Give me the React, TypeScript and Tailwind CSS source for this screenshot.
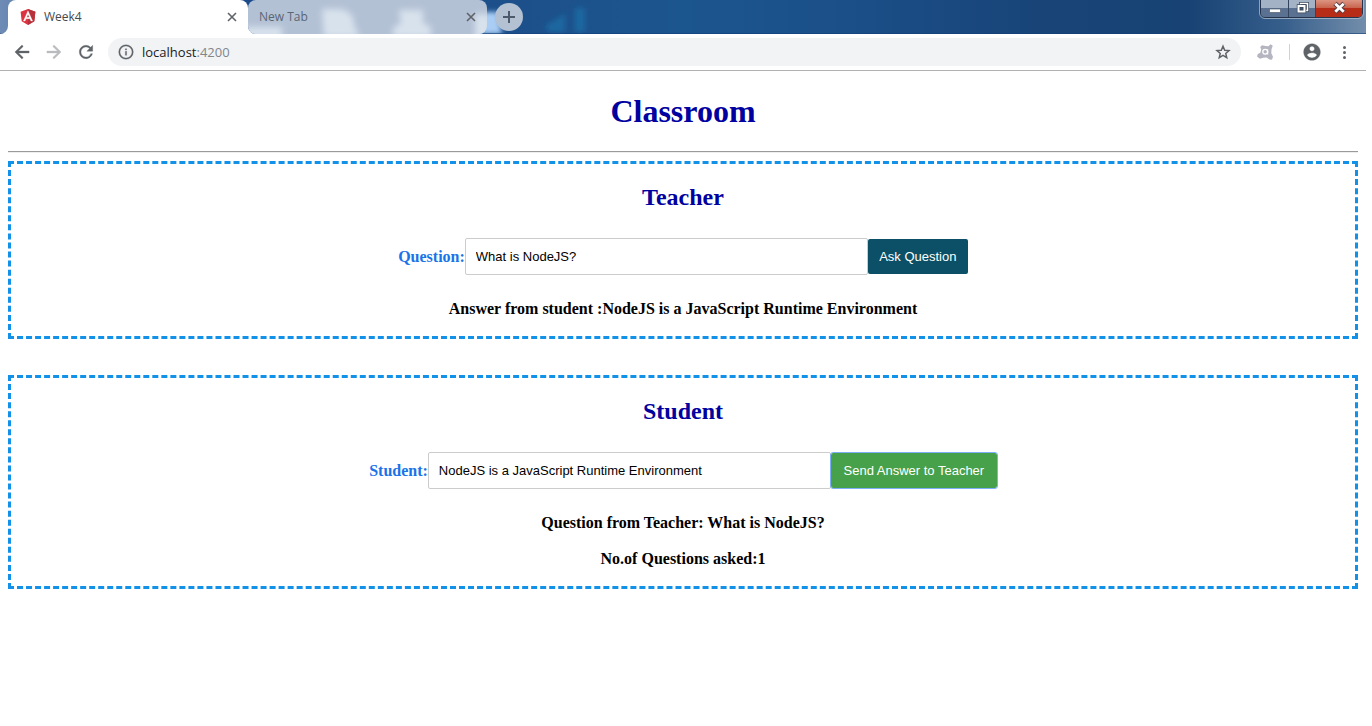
import type { ReactNode } from "react";

function AngularIcon() {
  return (
    <svg width="16" height="16" viewBox="0 0 16 16" aria-hidden="true">
      <path d="M8 0 .6 2.700l1.100 9.600L8 16l6.300-3.700L15.400 2.700z" fill="#dd3340" />
      <path d="M8 0v16l6.300-3.700L15.400 2.700z" fill="#b8303b" />
      <path d="M8 1.800 3.400 12h1.700l.95-2.300h3.900L10.900 12h1.700zm0 3.400 1.350 3.100h-2.700z" fill="#fff" stroke="#fff" strokeWidth=".3" />
    </svg>
  );
}

function CloseIcon() {
  return (
    <svg width="10" height="10" viewBox="0 0 10 10" aria-hidden="true">
      <path d="m1 1 8 8M9 1 1 9" stroke="#5f6368" strokeWidth="1.600" />
    </svg>
  );
}

function MaterialIcon({ d, color = "#5f6368", size = 20 }: { d: string; color?: string; size?: number }) {
  return (
    <svg width={size} height={size} viewBox="0 0 24 24" fill={color} stroke={color} strokeWidth=".4" aria-hidden="true">
      <path d={d} />
    </svg>
  );
}

function StripBackdrop() {
  return (
    <svg className="absolute inset-0 h-full w-full" viewBox="0 0 1366 34" preserveAspectRatio="none" aria-hidden="true">
      <defs>
        <linearGradient id="sky">
          <stop offset="0" stopColor="#6d8bb5" />
          <stop offset=".02" stopColor="#5f80ad" />
          <stop offset=".17" stopColor="#1b4a8a" />
          <stop offset=".36" stopColor="#1d4f8a" />
          <stop offset=".5" stopColor="#1c568f" />
          <stop offset=".62" stopColor="#1b4f88" />
          <stop offset=".76" stopColor="#184478" />
          <stop offset=".87" stopColor="#174273" />
          <stop offset=".94" stopColor="#375f8c" />
          <stop offset="1" stopColor="#738eab" />
        </linearGradient>
        <filter id="soft" x="-50%" y="-50%" width="200%" height="200%">
          <feGaussianBlur stdDeviation="2.500" />
        </filter>
      </defs>
      <rect width="1366" height="34" fill="url(#sky)" />
      <g filter="url(#soft)">
        <path d="M480 12h18l4 22h-22z" fill="#a9cdf5" />
        <path d="M545 26l20-12v18h-16zM575 8h10v24h-10z" fill="#1c70a8" opacity=".7" />
      </g>
      <rect y="33" width="1366" height="1" fill="#143f7a" opacity=".6" />
    </svg>
  );
}

function TabGlow() {
  return (
    <svg className="absolute inset-0 h-full w-full" viewBox="0 0 239 34" preserveAspectRatio="none" aria-hidden="true">
      <defs>
        <filter id="haze" x="-50%" y="-100%" width="200%" height="300%">
          <feGaussianBlur stdDeviation="3" />
        </filter>
      </defs>
      <rect width="239" height="34" fill="#b3c1d5" />
      <g filter="url(#haze)" fill="#d8e2ed">
        <path d="M74 9h18q14 2 14 16l6 12H76zM151 10h24v13l8 4v10h-38V28l8-5zM227 14h16v26h-16z" />
        <path d="M-4 27h38v12H-4z" />
      </g>
    </svg>
  );
}

function WindowControls() {
  return (
    <div className="absolute top-0 right-[3px] flex h-[18px] overflow-hidden rounded-b-[5px] border border-t-0 border-[#25344c] outline outline-[#b5c3d3]/70">
      <button type="button" aria-label="Minimize" className="flex w-[28px] items-center justify-center border-r border-[#33445e] bg-linear-to-b from-[#a3b2c5] from-45% to-[#5a7191] to-50%">
        <svg width="12" height="18" viewBox="0 0 12 18" aria-hidden="true">
          <path d="M.5 9h11v3.500H.5z" fill="#fff" stroke="#52606f" strokeWidth=".7" />
        </svg>
      </button>
      <button type="button" aria-label="Restore" className="flex w-[27px] items-center justify-center border-r border-[#33445e] bg-linear-to-b from-[#a3b2c5] from-45% to-[#5a7191] to-50%">
        <svg width="13" height="18" viewBox="0 0 13 18" aria-hidden="true">
          <path d="M4.500 3.500h7v7h-7z" fill="#67788f" stroke="#3b4759" strokeWidth="3" />
          <path d="M4.500 3.500h7v7h-7z" fill="none" stroke="#fff" strokeWidth="1.500" />
          <path d="M2.500 6h6v5.500h-6z" fill="#44546b" stroke="#3b4759" strokeWidth="3.400" />
          <path d="M2.500 6h6v5.500h-6z" fill="none" stroke="#fff" strokeWidth="2" />
        </svg>
      </button>
      <button type="button" aria-label="Close window" className="flex w-[46px] items-center justify-center bg-linear-to-b from-[#dc9482] from-0% via-[#c8654f] via-45% to-[#b62c17] to-50%">
        <svg width="13" height="18" viewBox="0 0 13 18" aria-hidden="true">
          <path d="m2 3.500 9 8.500M11 3.500 2 12" stroke="#563c42" strokeWidth="4.600" />
          <path d="m2.300 3.800 8.400 7.900M10.700 3.800l-8.400 7.900" stroke="#fff" strokeWidth="2.800" />
        </svg>
      </button>
    </div>
  );
}

function TabStrip() {
  return (
    <div className="relative flex h-[34px] pl-2">
      <StripBackdrop />
      <div className="relative flex w-[240px] items-center rounded-t-lg bg-white pr-[11px] pl-3 text-[12px] text-[#45494d]">
        <svg className="absolute bottom-0 -left-2" width="8" height="8" viewBox="0 0 8 8" aria-hidden="true">
          <path d="M8 0v8H0a8 8 0 0 0 8-8z" fill="#fff" />
        </svg>
        <svg className="absolute -right-2 bottom-0" width="8" height="8" viewBox="0 0 8 8" aria-hidden="true">
          <path d="M0 0v8h8a8 8 0 0 1-8-8z" fill="#fff" />
        </svg>
        <AngularIcon />
        <span className="ml-2 grow">Week4</span>
        <button type="button" aria-label="Close Week4">
          <CloseIcon />
        </button>
      </div>
      <div className="relative flex w-[239px] items-center overflow-hidden rounded-t-lg rounded-b-lg pr-[11px] pl-[11px] text-[12px] text-[#5b6675]">
        <TabGlow />
        <span className="relative grow">New Tab</span>
        <button type="button" aria-label="Close New Tab" className="relative">
          <CloseIcon />
        </button>
      </div>
      <button type="button" aria-label="New tab" className="relative mt-[3px] ml-2 flex size-7 items-center justify-center rounded-full bg-[#b3c1d3]">
        <svg width="12" height="12" viewBox="0 0 12 12" aria-hidden="true">
          <path d="M6 0v12M0 6h12" stroke="#4d5a6b" strokeWidth="2" />
        </svg>
      </button>
      <WindowControls />
    </div>
  );
}

function Toolbar() {
  return (
    <div className="flex h-[37px] items-center border-b border-[#b1b1b1] bg-white px-3">
      <button type="button" aria-label="Back">
        <MaterialIcon d="M20.500 10.850H7.830l5.590-5.440L12 3.500 3.500 12l8.500 8.500 1.410-1.910L7.830 13.150H20.500z" />
      </button>
      <button type="button" aria-label="Forward" className="ml-3">
        <MaterialIcon color="#b9bbbe" d="m12 3.500-1.410 1.910 5.580 5.440H3.500v2.300h12.670l-5.580 5.440L12 20.500l8.500-8.500z" />
      </button>
      <button type="button" aria-label="Reload" className="ml-3">
        <MaterialIcon d="M17.650 6.350A7.958 7.958 0 0 0 12 4c-4.420 0-7.990 3.580-7.990 8s3.570 8 7.990 8c3.730 0 6.840-2.550 7.730-6h-2.080A5.990 5.990 0 0 1 12 18c-3.310 0-6-2.690-6-6s2.690-6 6-6c1.660 0 3.140.69 4.220 1.780L13 11h7V4l-2.350 2.350z" />
      </button>
      <div className="ml-3 flex h-7 grow items-center rounded-full bg-[#f1f3f4] px-[10px]">
        <MaterialIcon size={16} d="M11 7h2v2h-2zm0 4h2v6h-2zm1-10a11 11 0 1 0 0 22 11 11 0 0 0 0-22zm0 20a9 9 0 1 1 0-18 9 9 0 0 1 0 18z" />
        <div role="textbox" aria-label="Address" className="ml-2 grow text-[13px] leading-5 text-[#202124]">
          localhost<span className="text-[#80868b]">:4200</span>
        </div>
        <button type="button" aria-label="Bookmark this page">
          <svg width="16" height="16" viewBox="0 0 16 16" aria-hidden="true">
            <path d="m8 2.200 1.700 4 4.300.35-3.250 2.850 1 4.200L8 11.400l-3.750 2.200 1-4.200L2 6.550l4.300-.35z" fill="none" stroke="#5f6368" strokeWidth="1.500" />
          </svg>
        </button>
      </div>
      <button type="button" aria-label="Extension" className="ml-4">
        <svg width="16" height="16" viewBox="0 0 16 16" aria-hidden="true">
          <path d="M5 1.200 8.500 2l3 .2L13.500.3l2.300 1.500-1.300 3.400-.2 4 1.700 3.600-1 2.900-2.600-.2-2.700-2.100-3.500.3-3.300 1.100L0 12.600.8 9.900 3.400 8.800 4.200 5.600 3.200 3z" fill="#b5b5c2" />
          <circle cx="8.200" cy="7.800" r="2.400" fill="none" stroke="#fff" strokeWidth="1.300" />
          <path d="M10.600 5.400v5" stroke="#fff" strokeWidth="1.300" />
        </svg>
      </button>
      <span className="mr-3 ml-4 h-4 w-px bg-[#cfd1d4]" />
      <button type="button" aria-label="Profile">
        <MaterialIcon d="M12 2C6.480 2 2 6.480 2 12s4.480 10 10 10 10-4.480 10-10S17.520 2 12 2zm0 3c1.660 0 3 1.340 3 3s-1.340 3-3 3-3-1.340-3-3 1.340-3 3-3zm0 14.200a7.200 7.200 0 0 1-6-3.220c.03-1.990 4-3.080 6-3.080 1.990 0 5.970 1.090 6 3.080a7.200 7.200 0 0 1-6 3.220z" />
      </button>
      <button type="button" aria-label="Menu" className="ml-3">
        <svg width="20" height="20" viewBox="0 0 20 20" fill="#5f6368" aria-hidden="true">
          <circle cx="10.500" cy="5.500" r="1.500" />
          <circle cx="10.500" cy="10.500" r="1.500" />
          <circle cx="10.500" cy="15.500" r="1.500" />
        </svg>
      </button>
    </div>
  );
}

function Panel({ title, children }: { title: string; children: ReactNode }) {
  return (
    <section className="border-[3px] border-dashed border-[#1191e8] pt-5 pb-[18px] text-center">
      <h2 className="mb-[27px] text-[24px] leading-[27px] font-bold text-[#0000a0]">{title}</h2>
      {children}
    </section>
  );
}

const labelClass = "text-[16px] font-bold text-[#1a73e8]";
const inputClass =
  "h-[37px] w-[403px] rounded-[2px] border border-[#ccc] bg-white px-[10px] font-['Liberation_Sans',Arial,sans-serif] text-[13px] text-black";
const buttonClass =
  "h-[35px] rounded-[2px] px-[10px] font-['Liberation_Sans',Arial,sans-serif] text-[13px] text-white";
const noteClass = "text-[16px] leading-[18px] font-bold text-black";

export default function App() {
  return (
    <div className="bg-white pr-1.5">
      <header className="font-['Open_Sans','Noto_Sans',sans-serif]">
        <TabStrip />
        <Toolbar />
      </header>
      <main className="px-2 pt-[21px] font-['Liberation_Serif','Times_New_Roman',serif]">
        <h1 className="text-center text-[32px] leading-[38px] font-bold text-[#0000a0]">Classroom</h1>
        <hr className="mt-[21px] mb-2 h-[2px] border-t border-b border-t-[#9a9a9a] border-b-[#eee]" />
        <Panel title="Teacher">
          <div className="flex items-center justify-center">
            <label htmlFor="question" className={labelClass}>Question:</label>
            <input id="question" type="text" defaultValue="What is NodeJS?" className={inputClass} />
            <button type="button" className={`${buttonClass} min-w-[100px] bg-[#0b5066]`}>Ask Question</button>
          </div>
          <p className={`mt-[25px] ${noteClass}`}>Answer from student :NodeJS is a JavaScript Runtime Environment</p>
        </Panel>
        <div className="h-9" />
        <Panel title="Student">
          <div className="flex items-center justify-center">
            <label htmlFor="answer" className={labelClass}>Student:</label>
            <input id="answer" type="text" defaultValue="NodeJS is a JavaScript Runtime Environment" className={inputClass} />
            <button type="button" className={`${buttonClass} min-w-[166px] bg-[#47a04a] outline outline-[#7eaef5]`}>Send Answer to Teacher</button>
          </div>
          <p className={`mt-[25px] ${noteClass}`}>Question from Teacher: What is NodeJS?</p>
          <p className={`mt-[18px] ${noteClass}`}>No.of Questions asked:1</p>
        </Panel>
      </main>
    </div>
  );
}
